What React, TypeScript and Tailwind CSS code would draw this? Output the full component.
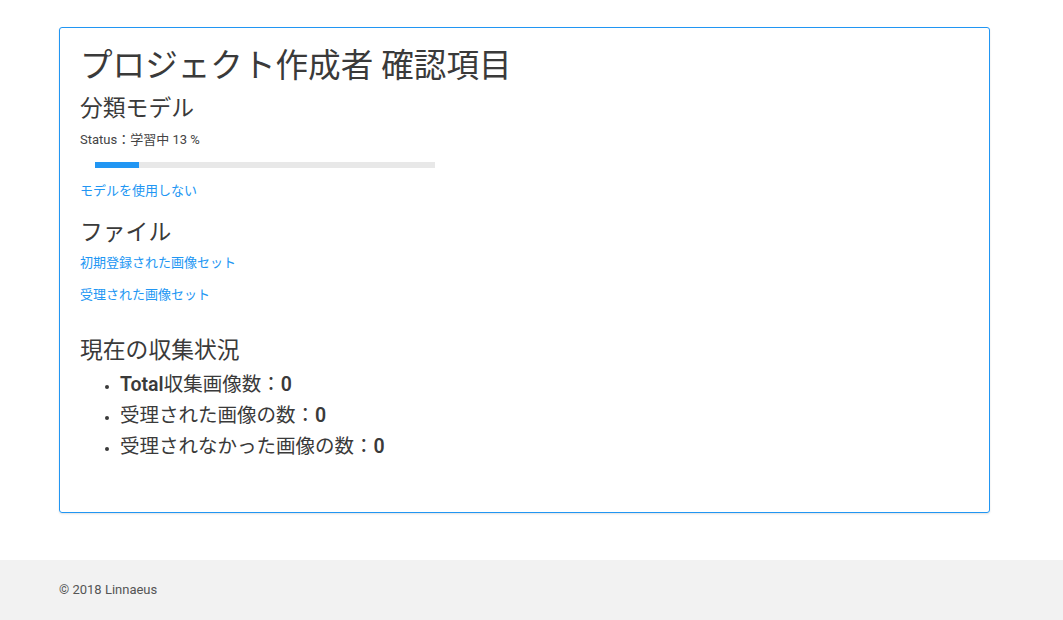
import React from 'react'

const font = { fontFamily: 'Roboto, "Noto Sans CJK JP", sans-serif' }

export default function App() {
  const progress = 13
  const links1 = ['モデルを使用しない']
  const stats = [
    { label: <><b className="font-semibold">Total</b>収集画像数：</>, value: 0 },
    { label: <>受理された画像の数：</>, value: 0 },
    { label: <>受理されなかった画像の数：</>, value: 0 },
  ]

  return (
    <div className="min-h-[620px] bg-white flex flex-col text-[#3a3a3a]" style={font}>
      <div className="pt-[27px] pl-[59px]">
        <div className="w-[931px] border border-[#2196f3] rounded-[3px] shadow-[0_1px_2px_rgba(0,0,0,0.12)] pt-[18px] pb-[50px] px-5">
          {/* Title */}
          <h1 className="text-[32.6px] leading-[40px] font-normal">プロジェクト作成者 確認項目</h1>

          {/* Model */}
          <h2 className="mt-[8px] text-[22.8px] leading-[30px] font-normal">分類モデル</h2>
          <div className="mt-[7px] text-[13px] leading-[18px] text-[#444]">Status：学習中 {progress} %</div>
          <div className="mt-[13px] ml-[15px] w-[340px] h-[6px] bg-[#e8e8e8]">
            <div className="h-full bg-[#2196f3]" style={{ width: `${progress}%` }} />
          </div>
          {links1.map(l => (
            <a key={l} className="block mt-[13px] text-[13px] leading-[20px] text-[#2196f3]">{l}</a>
          ))}

          {/* Files */}
          <h2 className="mt-[17px] text-[22.8px] leading-[30px] font-normal">ファイル</h2>
          <a className="block mt-[5px] text-[13px] leading-[20px] text-[#2196f3]">初期登録された画像セット</a>
          <a className="block mt-3 text-[13px] leading-[20px] text-[#2196f3]">受理された画像セット</a>

          {/* Current status */}
          <h2 className="mt-[31px] text-[22.8px] leading-[30px] font-normal">現在の収集状況</h2>
          <ul className="mt-[3px] pl-[40px] list-disc text-[19.5px] leading-[31px] marker:text-[13px]">
            {stats.map((s, i) => (
              <li key={i}>
                {s.label}<b className="font-semibold">{s.value}</b>
              </li>
            ))}
          </ul>
        </div>
      </div>

      <footer className="mt-[47px] h-[60px] bg-[#f2f2f2] flex items-center pl-[59px] text-[13px] text-[#555]">
        © 2018 Linnaeus
      </footer>
    </div>
  )
}
